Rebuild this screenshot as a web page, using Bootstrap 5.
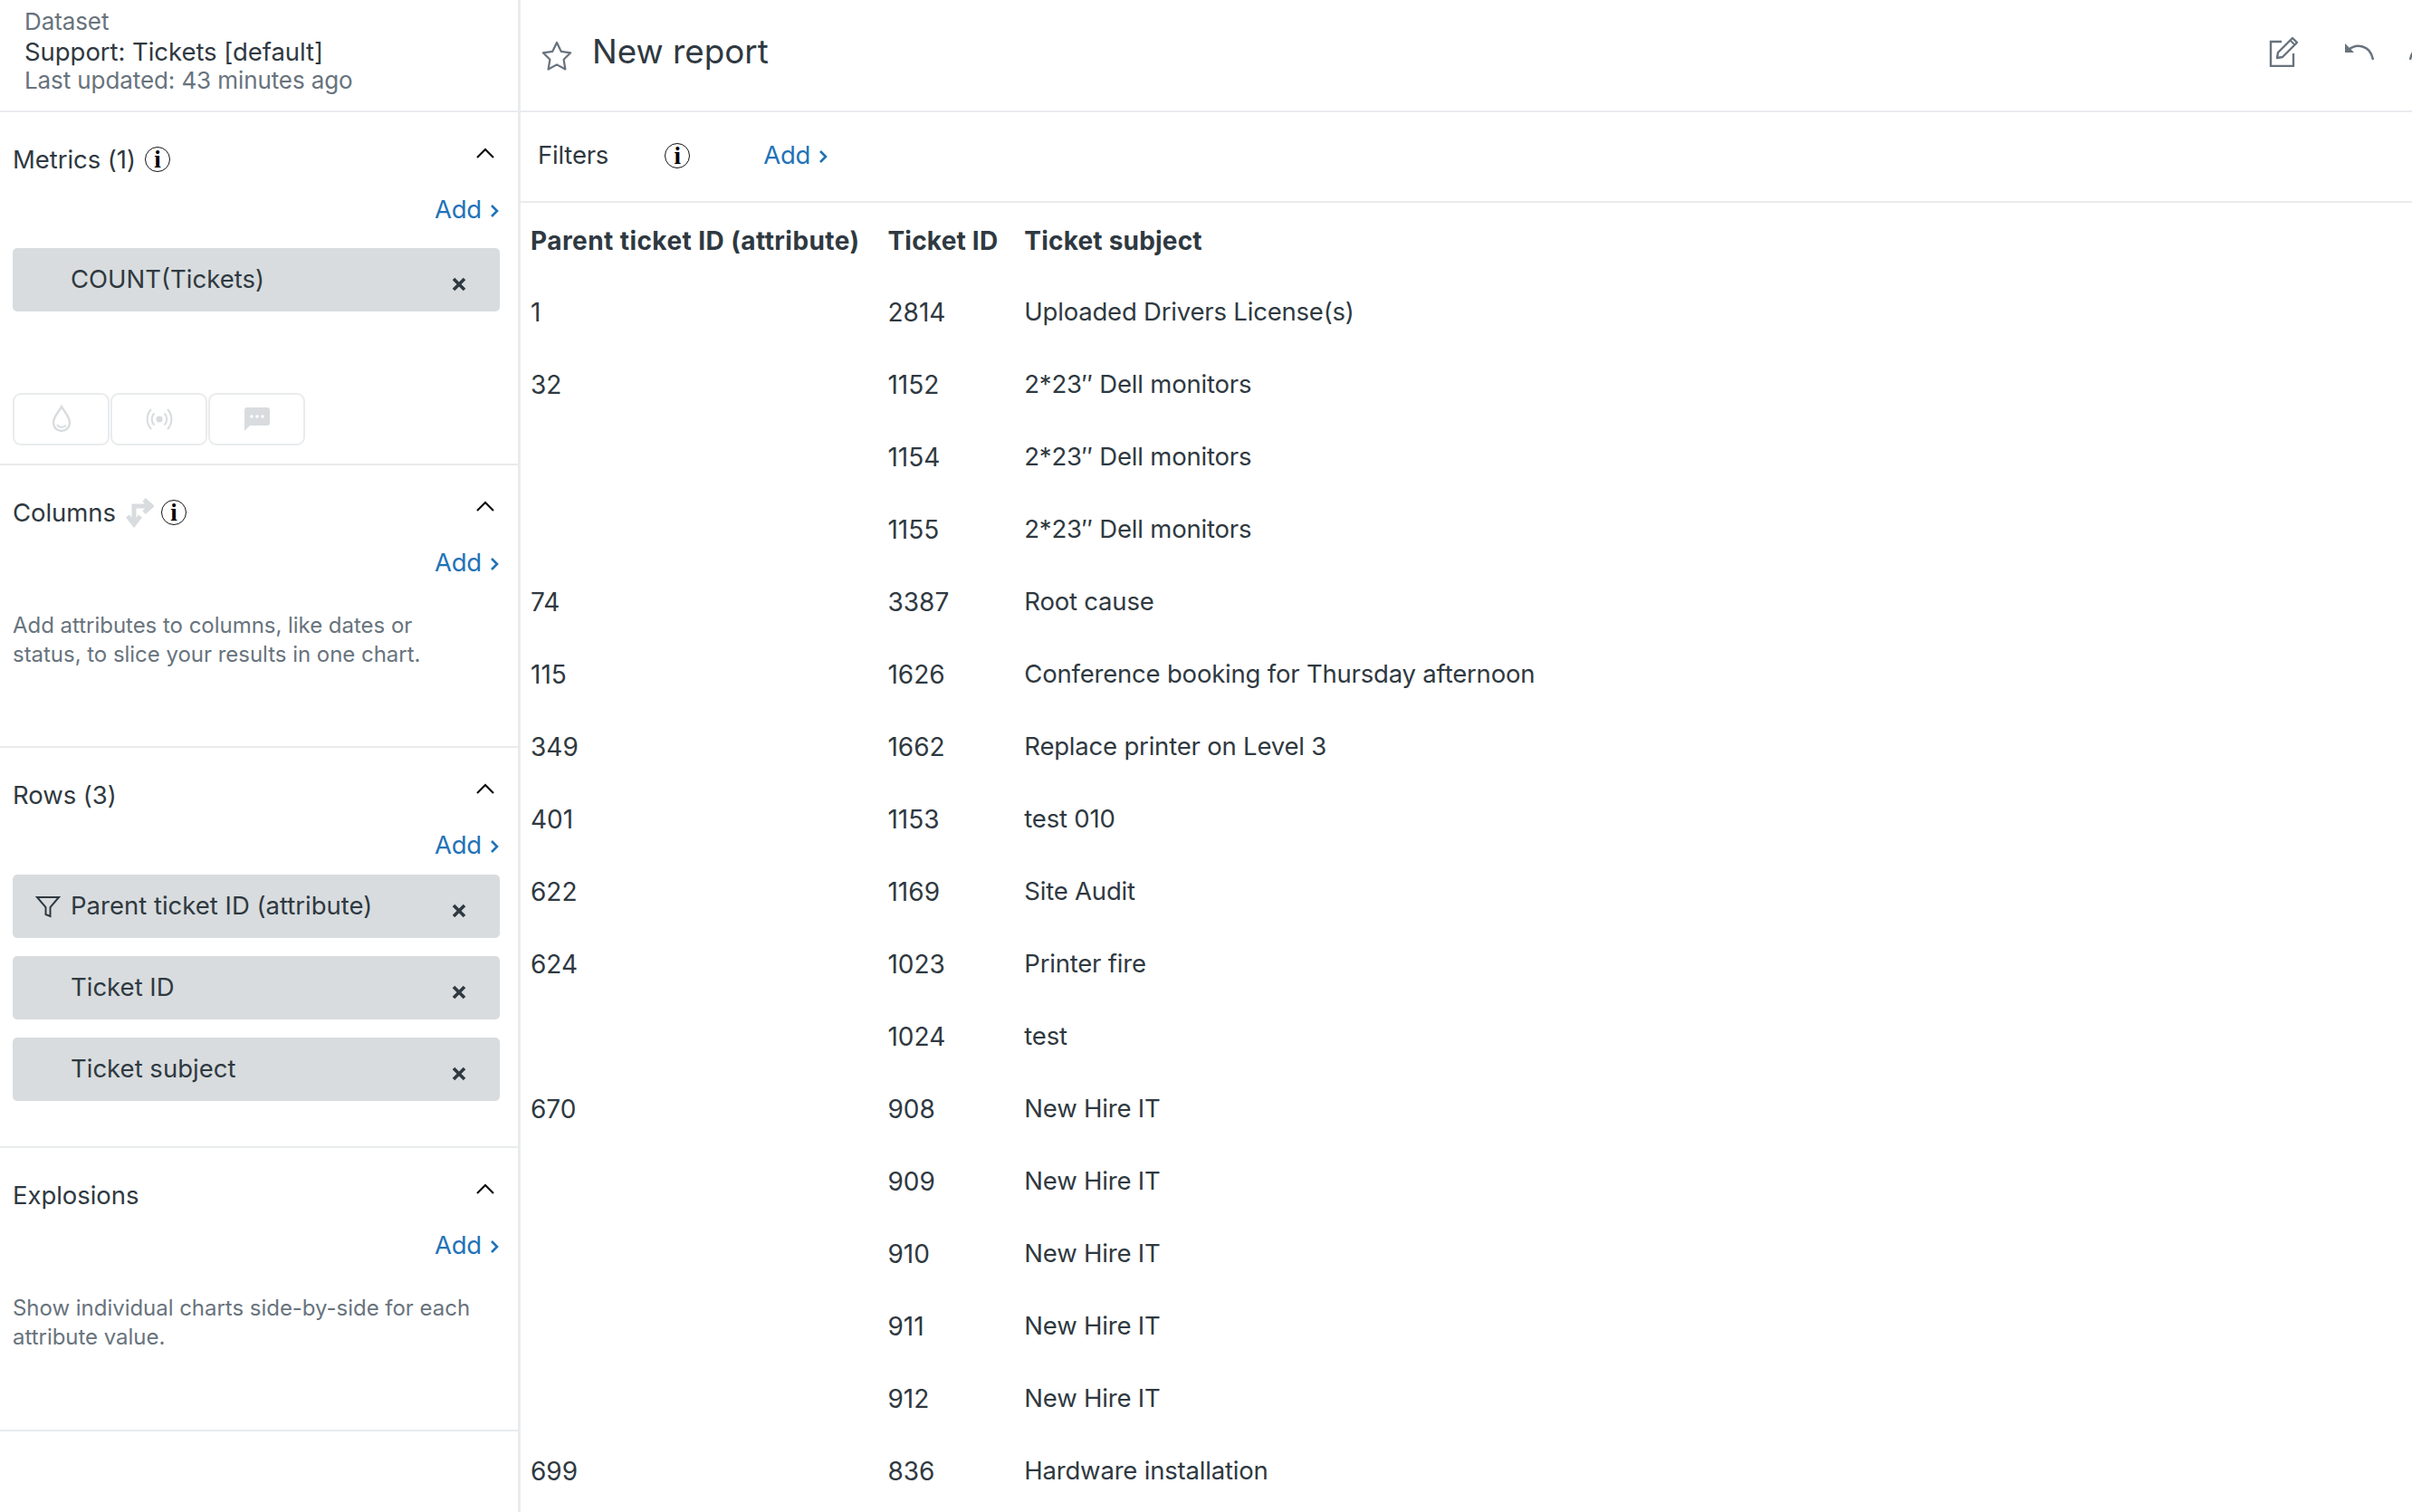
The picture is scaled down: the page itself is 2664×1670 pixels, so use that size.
<!DOCTYPE html>
<html lang="en"><head><meta charset="utf-8"><title>New report</title>
<link rel="stylesheet" href="https://cdn.jsdelivr.net/npm/bootstrap@5.3.0/dist/css/bootstrap.min.css">
<style>
html,body{height:100%;overflow:hidden}
body{font-family:Inter,"Liberation Sans",sans-serif;font-size:27.5px;letter-spacing:-.2px;color:#2f3941;background:#fff}
.shell{height:1670px}
.side{width:575px;flex:none;border-right:3px solid #e9ebed;height:100%}
.ds{height:124px;border-bottom:2px solid #e9ebed;padding:8px 0 0 27px;line-height:32.5px;letter-spacing:-.05px}
.ds .dim{color:#68737d;font-size:26px;letter-spacing:-.1px}
.sec{border-bottom:2px solid #e9ebed;padding:32px 20px 0 14px}
.sec-metrics{height:390px}
.sec-tall{height:312px}
.sec-rows{height:442px}
.sec-last{height:313px}
.sec-head{height:40px;margin-bottom:15px}
.lbl{line-height:40px;letter-spacing:-.05px}
.gap-lbl{margin-left:10px}
.chev{width:22px;height:14px;margin:-14px 5px 0 0}
.info{width:28px;height:28px;border:1.2px solid #111;border-radius:50%;font:700 27px/26px "Liberation Serif",serif;color:#000;text-align:center;flex:none;letter-spacing:0}
.add-row{height:40px;line-height:40px}
.add{color:#1f73b7;text-decoration:none;display:inline-flex;align-items:center;gap:8px}
.add svg{width:12px;height:18px;margin-top:3px}
.chip{height:70px;background:#d8dcde;border-radius:5px;margin-bottom:20px;padding-left:25px;padding-right:36px;letter-spacing:0}
.chip-ico{width:28px;height:28px;margin-right:11px;flex:none}
.chip-x{width:18px;height:18px;margin-top:10px}
.chips-a{margin-top:23px}
.chips-b{margin-top:13px}
.acts{margin-top:90px;gap:1px}
.act{width:107px;height:58px;border:2px solid #e9ebed;border-radius:9px;background:#fff}
.help{font-size:24px;line-height:32px;color:#68737d;margin-top:34px;max-width:515px;letter-spacing:-.03px}
.main{flex:1 1 auto;min-width:0;height:100%;overflow:hidden}
.top{height:124px;border-bottom:2px solid #e9ebed;padding-left:23px;white-space:nowrap}
.top h1{font-size:36.8px;font-weight:400;margin:0 0 0 22px;line-height:1;position:relative;top:-4px;letter-spacing:0}
.star{width:34px;height:33px}
.tools{width:158px;flex:none;margin-left:auto;margin-top:-8px;overflow:hidden}
.tools svg{flex:none}
.tool-gap{margin-left:50px}
.tool-end{margin-left:39px}
.filters{height:100px;border-bottom:2px solid #e9ebed;padding:0 0 3px 19px}
.filters .info{margin-left:62px}
.filters .add{margin-left:81px}
.tbl{border-collapse:collapse;margin-top:2px}
.tbl th{height:79px;font-weight:700;padding:0 15px;vertical-align:middle;font-size:28px;letter-spacing:.2px}
.tbl td{height:80px;padding:0 15px;vertical-align:middle}
.tbl td:nth-child(-n+2){font-size:28px;letter-spacing:0}
.tbl th:first-child,.tbl td:first-child{padding-left:11px;padding-right:16px}
.tbl th:first-child{letter-spacing:.43px}
.tbl th:nth-child(2),.tbl td:nth-child(2){padding-right:14px}
</style></head>
<body>
<div class="shell d-flex">
<aside class="side">
  <div class="ds">
    <div class="dim">Dataset</div>
    <div>Support: Tickets [default]</div>
    <div class="dim">Last updated: 43 minutes ago</div>
  </div>

  <section class="sec sec-metrics">
    <div class="sec-head d-flex align-items-center">
      <span class="lbl">Metrics (1)</span><span class="info gap-lbl">i</span>
      <svg class="chev ms-auto" viewBox="0 0 22 14"><path d="M2 12l9-9 9 9" fill="none" stroke="#111" stroke-width="2.2"/></svg>
    </div>
    <div class="add-row text-end"><a class="add" href="#">Add<svg viewBox="0 0 12 18"><path d="M3 3l6 6-6 6" fill="none" stroke="#1f73b7" stroke-width="2.6"/></svg></a></div>
    <div class="chips-a">
      <div class="chip d-flex align-items-center"><span class="chip-ico"></span><span class="flex-grow-1">COUNT(Tickets)</span><svg class="chip-x" viewBox="0 0 18 18"><path d="M3 3l12 12M15 3L3 15" stroke="#2f3941" stroke-width="3.6"/></svg></div>
    </div>
    <div class="acts d-flex">
      <div class="act d-flex align-items-center justify-content-center"><svg width="22" height="32" viewBox="0 0 22 32"><path d="M11 2c3 6 9 11 9 18a9 9 0 0 1-18 0C2 13 8 8 11 2z" fill="none" stroke="#d8dcde" stroke-width="2.4"/><path d="M6 22c2 3 6 4 10 1" fill="none" stroke="#d8dcde" stroke-width="2"/></svg></div>
      <div class="act d-flex align-items-center justify-content-center"><svg width="30" height="26" viewBox="0 0 30 26"><circle cx="15" cy="13" r="3.6" fill="#d8dcde"/><path d="M9.5 6.500a9 9 0 0 0 0 13M20.500 6.500a9 9 0 0 1 0 13M6 2a16 16 0 0 0 0 22M24 2a16 16 0 0 1 0 22" fill="none" stroke="#d8dcde" stroke-width="2"/></svg></div>
      <div class="act d-flex align-items-center justify-content-center"><svg width="30" height="28" viewBox="0 0 30 28"><path d="M4 1h22a3 3 0 0 1 3 3v14a3 3 0 0 1-3 3H7l-6 6V4a3 3 0 0 1 3-3z" fill="#d8dcde"/><circle cx="9" cy="11" r="1.700" fill="#fff"/><circle cx="15" cy="11" r="1.700" fill="#fff"/><circle cx="21" cy="11" r="1.700" fill="#fff"/></svg></div>
    </div>
  </section>

  <section class="sec sec-tall">
    <div class="sec-head d-flex align-items-center">
      <span class="lbl">Columns</span>
      <svg class="gap-lbl" width="32" height="34" viewBox="0 0 32 34"><path d="M10 26V10h16M21 3l8 7-8 7M3 21l7 9 7-9" fill="none" stroke="#d8dcde" stroke-width="5"/></svg>
      <span class="info ms-2">i</span>
      <svg class="chev ms-auto" viewBox="0 0 22 14"><path d="M2 12l9-9 9 9" fill="none" stroke="#111" stroke-width="2.2"/></svg>
    </div>
    <div class="add-row text-end"><a class="add" href="#">Add<svg viewBox="0 0 12 18"><path d="M3 3l6 6-6 6" fill="none" stroke="#1f73b7" stroke-width="2.6"/></svg></a></div>
    <p class="help mb-0">Add attributes to columns, like dates or status, to slice your results in one chart.</p>
  </section>

  <section class="sec sec-rows">
    <div class="sec-head d-flex align-items-center">
      <span class="lbl">Rows (3)</span>
      <svg class="chev ms-auto" viewBox="0 0 22 14"><path d="M2 12l9-9 9 9" fill="none" stroke="#111" stroke-width="2.2"/></svg>
    </div>
    <div class="add-row text-end"><a class="add" href="#">Add<svg viewBox="0 0 12 18"><path d="M3 3l6 6-6 6" fill="none" stroke="#1f73b7" stroke-width="2.6"/></svg></a></div>
    <div class="chips-b">
      <div class="chip d-flex align-items-center"><svg class="chip-ico" viewBox="0 0 28 28"><path d="M2 4h24l-9.500 11v10l-5-2V15z" fill="none" stroke="#2f3941" stroke-width="2"/></svg><span class="flex-grow-1">Parent ticket ID (attribute)</span><svg class="chip-x" viewBox="0 0 18 18"><path d="M3 3l12 12M15 3L3 15" stroke="#2f3941" stroke-width="3.6"/></svg></div>
      <div class="chip d-flex align-items-center"><span class="chip-ico"></span><span class="flex-grow-1">Ticket ID</span><svg class="chip-x" viewBox="0 0 18 18"><path d="M3 3l12 12M15 3L3 15" stroke="#2f3941" stroke-width="3.6"/></svg></div>
      <div class="chip d-flex align-items-center"><span class="chip-ico"></span><span class="flex-grow-1">Ticket subject</span><svg class="chip-x" viewBox="0 0 18 18"><path d="M3 3l12 12M15 3L3 15" stroke="#2f3941" stroke-width="3.6"/></svg></div>
    </div>
  </section>

  <section class="sec sec-last">
    <div class="sec-head d-flex align-items-center">
      <span class="lbl">Explosions</span>
      <svg class="chev ms-auto" viewBox="0 0 22 14"><path d="M2 12l9-9 9 9" fill="none" stroke="#111" stroke-width="2.2"/></svg>
    </div>
    <div class="add-row text-end"><a class="add" href="#">Add<svg viewBox="0 0 12 18"><path d="M3 3l6 6-6 6" fill="none" stroke="#1f73b7" stroke-width="2.6"/></svg></a></div>
    <p class="help mb-0">Show individual charts side-by-side for each attribute value.</p>
  </section>
</aside>

<main class="main">
  <header class="top d-flex align-items-center">
    <svg class="star" viewBox="0 0 34 33"><path d="M17 2l4.700 9.800 10.500 1.500-7.600 7.500 1.800 10.700L17 26.400 7.600 31.500l1.800-10.700L1.800 13.300l10.500-1.500z" fill="none" stroke="#68737d" stroke-width="2.200" stroke-linejoin="round"/></svg>
    <h1>New report</h1>
    <div class="tools d-flex align-items-center">
      <svg width="33" height="34" viewBox="0 0 33 34"><path d="M14 6H2v27h25V19" fill="none" stroke="#68737d" stroke-width="2.400"/><path d="M10 18L26 2l5 5-16 16-6 1z" fill="none" stroke="#68737d" stroke-width="2.400" stroke-linejoin="round"/><path d="M24 5l4 4" stroke="#68737d" stroke-width="2"/></svg>
      <svg class="tool-gap" width="33" height="20" viewBox="0 0 33 20"><path d="M1 1v10h10z" fill="#68737d"/><path d="M5 8c8-7 24-6 27 11" fill="none" stroke="#68737d" stroke-width="2.400"/></svg>
      <svg class="tool-end" width="33" height="20" viewBox="0 0 33 20"><path d="M32 1v10H22z" fill="#68737d"/><path d="M28 8C20 1 4 2 1 19" fill="none" stroke="#68737d" stroke-width="2.400"/></svg>
    </div>
  </header>
  <div class="filters d-flex align-items-center">
    <span>Filters</span><span class="info">i</span>
    <a class="add" href="#">Add<svg viewBox="0 0 12 18"><path d="M3 3l6 6-6 6" fill="none" stroke="#1f73b7" stroke-width="2.6"/></svg></a>
  </div>
  <table class="tbl">
    <thead><tr><th>Parent ticket ID (attribute)</th><th>Ticket ID</th><th>Ticket subject</th></tr></thead>
    <tbody>
      <tr><td>1</td><td>2814</td><td>Uploaded Drivers License(s)</td></tr>
      <tr><td>32</td><td>1152</td><td>2*23″ Dell monitors</td></tr>
      <tr><td></td><td>1154</td><td>2*23″ Dell monitors</td></tr>
      <tr><td></td><td>1155</td><td>2*23″ Dell monitors</td></tr>
      <tr><td>74</td><td>3387</td><td>Root cause</td></tr>
      <tr><td>115</td><td>1626</td><td>Conference booking for Thursday afternoon</td></tr>
      <tr><td>349</td><td>1662</td><td>Replace printer on Level 3</td></tr>
      <tr><td>401</td><td>1153</td><td>test 010</td></tr>
      <tr><td>622</td><td>1169</td><td>Site Audit</td></tr>
      <tr><td>624</td><td>1023</td><td>Printer fire</td></tr>
      <tr><td></td><td>1024</td><td>test</td></tr>
      <tr><td>670</td><td>908</td><td>New Hire IT</td></tr>
      <tr><td></td><td>909</td><td>New Hire IT</td></tr>
      <tr><td></td><td>910</td><td>New Hire IT</td></tr>
      <tr><td></td><td>911</td><td>New Hire IT</td></tr>
      <tr><td></td><td>912</td><td>New Hire IT</td></tr>
      <tr><td>699</td><td>836</td><td>Hardware installation</td></tr>
    </tbody>
  </table>
</main>
</div>
</body></html>
